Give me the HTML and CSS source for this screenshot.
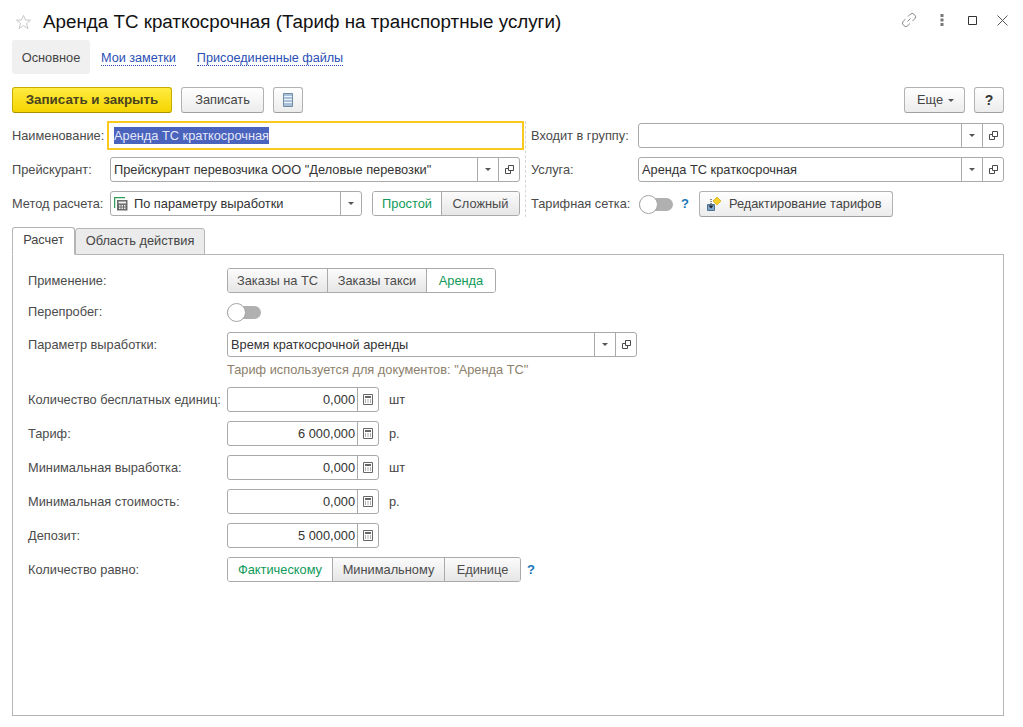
FILE: index.html
```html
<!DOCTYPE html>
<html lang="ru">
<head>
<meta charset="utf-8">
<title>Аренда ТС краткосрочная</title>
<link rel="stylesheet" href="styles.css">
</head>
<body>
<svg class="defs" width="0" height="0" aria-hidden="true">
  <symbol id="open" viewBox="0 0 9 9"><path d="M3.500 .5h5v5h-5zM3 3.500H.5v5h5V6" fill="none" stroke="#4a4a4a"/></symbol>
  <symbol id="calc" viewBox="0 0 10 11"><path d="M.5 .5h9v10h-9z" fill="#fff" stroke="#666"/><path d="M2 2h6v2h-6z" fill="#666"/><path d="M2 5.500h1v1h-1zM4.500 5.500h1v1h-1zM7 5.500h1v1h-1zM2 7.500h1v1h-1zM4.500 7.500h1v1h-1zM7 7.500h1v1h-1z" fill="#666"/></symbol>
</svg>
<div class="win">
  <header class="head">
    <svg class="star" width="17" height="16" viewBox="0 0 18 17"><path d="M9 1.500l2.200 5h5.300l-4.300 3.500 1.600 5.500L9 12.300 4.200 15.500l1.600-5.500L1.500 6.500h5.300z" fill="#fff" stroke="#c4c4c4"/></svg>
    <h1 class="title">Аренда ТС краткосрочная (Тариф на транспортные услуги)</h1>
    <div class="win-tools">
      <svg class="t-link" width="16" height="16" viewBox="0 0 16 16"><path d="M6.500 9.500l3-3M7 4.500l2.200-2.200a2.700 2.700 0 0 1 3.900 0l.6.600a2.700 2.700 0 0 1 0 3.900L11.500 9M9 11.500l-2.200 2.200a2.700 2.700 0 0 1-3.900 0l-.6-.6a2.700 2.700 0 0 1 0-3.900L4.500 7" fill="none" stroke="#888" stroke-width="1"/></svg>
      <svg class="t-dots" width="4" height="12" viewBox="0 0 4 12"><path d="M.5 0h3v3h-3zM.5 4.500h3v3h-3zM.5 9h3v3h-3z" fill="#777"/></svg>
      <svg class="t-max" width="9" height="9" viewBox="0 0 9 9"><path d="M.5 .5h8v8h-8z" fill="none" stroke="#333"/></svg>
      <svg class="t-close" width="11" height="11" viewBox="0 0 11 11"><path d="M.5 .5l10 10M10.500 .5l-10 10" fill="none" stroke="#555"/></svg>
    </div>
  </header>

  <nav class="nav">
    <span class="nav-cur">Основное</span>
    <a class="nav-link nav-first">Мои заметки</a>
    <a class="nav-link">Присоединенные файлы</a>
  </nav>

  <div class="bar">
    <button class="btn btn-main">Записать и закрыть</button>
    <button class="btn btn-save">Записать</button>
    <button class="btn btn-ico"><svg width="10" height="14" viewBox="0 0 10 14"><path d="M.5 .5h9v13h-9z" fill="#a9c0d6" stroke="#6f8ba6"/><path d="M1 3.500h8M1 6.500h8M1 9.500h8" stroke="#eef3f8"/></svg></button>
    <button class="btn btn-more">Еще<i class="caret"></i></button>
    <button class="btn btn-help">?</button>
  </div>

  <section class="form">
    <div class="col-l">
      <div class="f-row f-row1">
        <label class="lab lab-l1">Наименование:</label>
        <div class="focus"><span class="sel">Аренда ТС краткосрочная</span></div>
      </div>
      <div class="f-row f-row2">
        <label class="lab lab-l">Прейскурант:</label>
        <div class="field w-price">
          <span class="val">Прейскурант перевозчика ООО "Деловые перевозки"</span>
          <span class="cell"><i class="caret"></i></span>
          <span class="cell"><svg width="9" height="9"><use href="#open"/></svg></span>
        </div>
      </div>
      <div class="f-row f-row3">
        <label class="lab lab-l">Метод расчета:</label>
        <div class="field w-method">
          <svg class="m-ico" width="14" height="14" viewBox="0 0 14 14"><path d="M.5 11V.5H11" fill="none" stroke="#2f9e57" stroke-width="1.500"/><path d="M3 3h10.500v10.500H3z" fill="#6b6b6b"/><path d="M4.500 4.500h7.500v2H4.500z" fill="#eee"/><path d="M5 8h1.500v1.500H5zM7.500 8H9v1.500H7.500zM10 8h1.500v1.500H10zM5 10.500h1.500V12H5zM7.500 10.500H9V12H7.500zM10 10.500h1.500V12H10z" fill="#eee"/></svg>
          <span class="val val-m">По параметру выработки</span>
          <span class="cell"><i class="caret"></i></span>
        </div>
        <div class="seg seg-method">
          <span class="seg-i on si-7">Простой</span>
          <span class="seg-i si-8">Сложный</span>
        </div>
      </div>
    </div>
    <div class="col-r">
      <div class="r-row r-row1">
        <label class="lab lab-r">Входит в группу:</label>
        <div class="field grow">
          <span class="val"></span>
          <span class="cell"><i class="caret"></i></span>
          <span class="cell"><svg width="9" height="9"><use href="#open"/></svg></span>
        </div>
      </div>
      <div class="r-row r-row2">
        <label class="lab lab-r">Услуга:</label>
        <div class="field grow">
          <span class="val">Аренда ТС краткосрочная</span>
          <span class="cell"><i class="caret"></i></span>
          <span class="cell"><svg width="9" height="9"><use href="#open"/></svg></span>
        </div>
      </div>
      <div class="r-row r-row3">
        <label class="lab lab-r">Тарифная сетка:</label>
        <span class="tog tog-r"><i class="knob"></i></span>
        <span class="q q-r">?</span>
        <button class="btn btn-edit">
          <svg width="16" height="16" viewBox="0 0 16 16"><path d="M11 1l4 4-4 4-4-4z" fill="#f5cf2a" stroke="#d4ab10" stroke-width=".7"/><path d="M1.500 8.500h7v6h-7z" fill="#7ea6cb" stroke="#4f7191"/><path d="M5 3v6" stroke="#222" stroke-dasharray="1 1"/><path d="M2.500 9.500h5L5 12.500z" fill="#222"/></svg>
          <span>Редактирование тарифов</span>
        </button>
      </div>
    </div>
  </section>

  <div class="tabs">
    <span class="tab tab-on">Расчет</span>
    <span class="tab">Область действия</span>
  </div>
  <section class="panel">
    <div class="p-row p-apply">
      <label class="p-lab">Применение:</label>
      <div class="seg">
        <span class="seg-i si-1">Заказы на ТС</span>
        <span class="seg-i si-2">Заказы такси</span>
        <span class="seg-i on si-3">Аренда</span>
      </div>
    </div>
    <div class="p-row p-over">
      <label class="p-lab">Перепробег:</label>
      <span class="tog"><i class="knob"></i></span>
    </div>
    <div class="p-row p-param">
      <label class="p-lab">Параметр выработки:</label>
      <div class="field w-param">
        <span class="val">Время краткосрочной аренды</span>
        <span class="cell"><i class="caret"></i></span>
        <span class="cell"><svg width="9" height="9"><use href="#open"/></svg></span>
      </div>
    </div>
    <p class="hint">Тариф используется для документов: "Аренда ТС"</p>
    <div class="p-row p-first">
      <label class="p-lab">Количество бесплатных единиц:</label>
      <div class="field w-num"><span class="val num">0,000</span><span class="cell"><svg width="10" height="11"><use href="#calc"/></svg></span></div>
      <span class="unit">шт</span>
    </div>
    <div class="p-row p-num">
      <label class="p-lab">Тариф:</label>
      <div class="field w-num"><span class="val num">6 000,000</span><span class="cell"><svg width="10" height="11"><use href="#calc"/></svg></span></div>
      <span class="unit">р.</span>
    </div>
    <div class="p-row p-num">
      <label class="p-lab">Минимальная выработка:</label>
      <div class="field w-num"><span class="val num">0,000</span><span class="cell"><svg width="10" height="11"><use href="#calc"/></svg></span></div>
      <span class="unit">шт</span>
    </div>
    <div class="p-row p-num">
      <label class="p-lab">Минимальная стоимость:</label>
      <div class="field w-num"><span class="val num">0,000</span><span class="cell"><svg width="10" height="11"><use href="#calc"/></svg></span></div>
      <span class="unit">р.</span>
    </div>
    <div class="p-row p-num">
      <label class="p-lab">Депозит:</label>
      <div class="field w-num"><span class="val num">5 000,000</span><span class="cell"><svg width="10" height="11"><use href="#calc"/></svg></span></div>
    </div>
    <div class="p-row p-num">
      <label class="p-lab">Количество равно:</label>
      <div class="seg">
        <span class="seg-i on si-4">Фактическому</span>
        <span class="seg-i si-5">Минимальному</span>
        <span class="seg-i si-6">Единице</span>
      </div>
      <span class="q q-p">?</span>
    </div>
  </section>
</div>
</body>
</html>
```
FILE: styles.css
```css
* { box-sizing: border-box; }
html, body { margin: 0; background: #fff; }
body { font: 12.8px/16px "Liberation Sans", Arial, sans-serif; color: #4b4b4b; }
.defs { position: absolute; }
.win { width: 1023px; height: 727px; padding: 0 19px 0 12px; overflow: hidden; }

.head { display: flex; align-items: center; height: 40px; padding-top: 3px; }
.star { margin-left: 3px; }
.title { margin: 0 0 0 11px; font-size: 18.8px; font-weight: 400; color: #111; line-height: 24px; }
.win-tools { margin-left: auto; display: flex; align-items: center; margin-right: -4px; margin-bottom: 3px; }
.t-link { margin-right: 23px; }
.t-dots { margin-right: 24px; }
.t-max { margin-right: 20px; }

.nav { display: flex; align-items: center; height: 34px; }
.nav-cur { width: 78px; height: 34px; line-height: 36px; text-align: center; background: #f0f0f0; border-radius: 3px; color: #444; }
.nav-link { color: #2b4fb5; border-bottom: 1px dotted #2b4fb5; font-size: 12.65px; line-height: 14px; margin: 2px 0 0 21px; }
.nav-first { margin-left: 11px; }

.bar { display: flex; height: 26px; margin-top: 13px; }
.btn { height: 26px; padding: 0; font: inherit; color: #444; border: 1px solid #b2b2b2; border-bottom-color: #a0a0a0; border-radius: 3px; background: linear-gradient(#fff, #ececec); display: flex; align-items: center; justify-content: center; }
.btn-main { width: 160px; font-weight: 700; font-size: 13.4px; color: #4a4320; background: linear-gradient(#ffec40, #f5d400); border-color: #c6ab00; border-bottom-color: #a89000; }
.btn-save { width: 83px; margin-left: 9px; }
.btn-ico { width: 30px; margin-left: 9px; }
.btn-more { width: 61px; margin-left: auto; padding-left: 2px; }
.btn-more .caret { margin-left: 5px; }
.btn-help { width: 30px; margin-left: 9px; font-size: 14px; font-weight: 700; color: #333; }

.caret { display: block; width: 0; height: 0; border: 3px solid transparent; border-top: 3px solid #555; border-bottom: 0; }

.form { display: flex; margin-top: 8px; height: 96px; }
.col-l { width: 512px; }
.col-r { width: 479px; margin-left: 1px; padding-left: 5px; border-left: 1px dashed #d6d6d6; }
.f-row { display: flex; align-items: center; }
.f-row1 { height: 29px; }
.f-row2 { height: 25px; margin-top: 7px; }
.f-row3 { height: 25px; margin-top: 9px; }
.lab { flex: none; white-space: nowrap; }
.lab-l1 { width: 95px; }
.lab-l { width: 98px; }
.lab-r { width: 107px; }
.focus { width: 417px; height: 29px; border: 2px solid #fbc81e; padding: 4px 5px; line-height: 17px; }
.sel { display: inline-block; height: 17px; background: #4a63bc; color: #e4e8fa; }
.field { display: flex; align-items: center; height: 25px; border: 1px solid #aaa; border-radius: 3px; background: #fff; color: #333; }
.grow { flex: 1; }
.val { flex: 1; padding-left: 3px; white-space: nowrap; overflow: hidden; }
.val-m { padding-left: 6px; }
.cell { flex: none; width: 21px; height: 23px; border-left: 1px solid #aaa; display: flex; align-items: center; justify-content: center; }
.w-price { width: 410px; }
.w-method { width: 252px; }
.m-ico { margin-left: 3px; }
.seg { display: flex; height: 25px; border: 1px solid #aaa; border-radius: 3px; overflow: hidden; }
.seg-method { width: 148px; margin-left: 10px; }
.seg-i { display: flex; align-items: center; justify-content: center; background: linear-gradient(#fbfbfb, #e6e6e6); color: #4b4b4b; border-left: 1px solid #aaa; white-space: nowrap; }
.seg-i:first-child { border-left: 0; }
.seg-i.on { background: #fff; color: #0f9a58; }

.r-row { display: flex; align-items: center; }
.r-row1 { height: 25px; margin-top: 2px; }
.r-row2 { height: 25px; margin-top: 9px; }
.r-row3 { height: 26px; margin-top: 9px; }
.tog { flex: none; position: relative; display: block; width: 34px; height: 13px; margin-top: 1px; background: #b0b0b0; border-radius: 7px; }
.knob { position: absolute; left: 0; top: -3px; width: 19px; height: 19px; border-radius: 50%; background: #fff; border: 1px solid #a5a5a5; }
.tog-r { margin-left: 1px; }
.q { font-size: 13px; font-weight: 700; color: #1a76b8; }
.q-r { margin-left: 8px; }
.q-p { margin-left: 6px; }
.btn-edit { width: 194px; margin-left: 10px; justify-content: flex-start; padding-left: 6px; }
.btn-edit span { margin-left: 7px; }

.tabs { display: flex; align-items: flex-end; height: 28px; margin-top: 10px; position: relative; z-index: 1; }
.tab { height: 27px; width: 130px; line-height: 24px; text-align: center; background: #ebebeb; border: 1px solid #b5b5b5; border-radius: 3px 3px 0 0; color: #444; }
.tab-on { width: 63px; height: 28px; background: #fff; border-bottom-color: #fff; }
.panel { height: 462px; margin-top: -1px; padding: 13px 0 0 15px; border: 1px solid #b5b5b5; }
.p-row { display: flex; align-items: center; height: 25px; }
.p-lab { flex: none; width: 199px; white-space: nowrap; }
.p-over { margin-top: 6px; }
.p-param { margin-top: 8px; }
.hint { margin: 5px 0 0 199px; height: 16px; color: #8d7f6c; }
.p-first { margin-top: 9px; }
.p-num { margin-top: 9px; }
.w-param { width: 410px; }
.w-num { width: 152px; }
.num { text-align: right; padding-right: 2px; }
.unit { margin-left: 10px; color: #444; }
.si-1 { width: 99px; }
.si-2 { width: 99px; }
.si-3 { width: 69px; }
.si-4 { width: 104px; }
.si-5 { width: 112px; }
.si-6 { width: 76px; }
.si-7 { width: 68px; }
.si-8 { flex: 1; }
```
